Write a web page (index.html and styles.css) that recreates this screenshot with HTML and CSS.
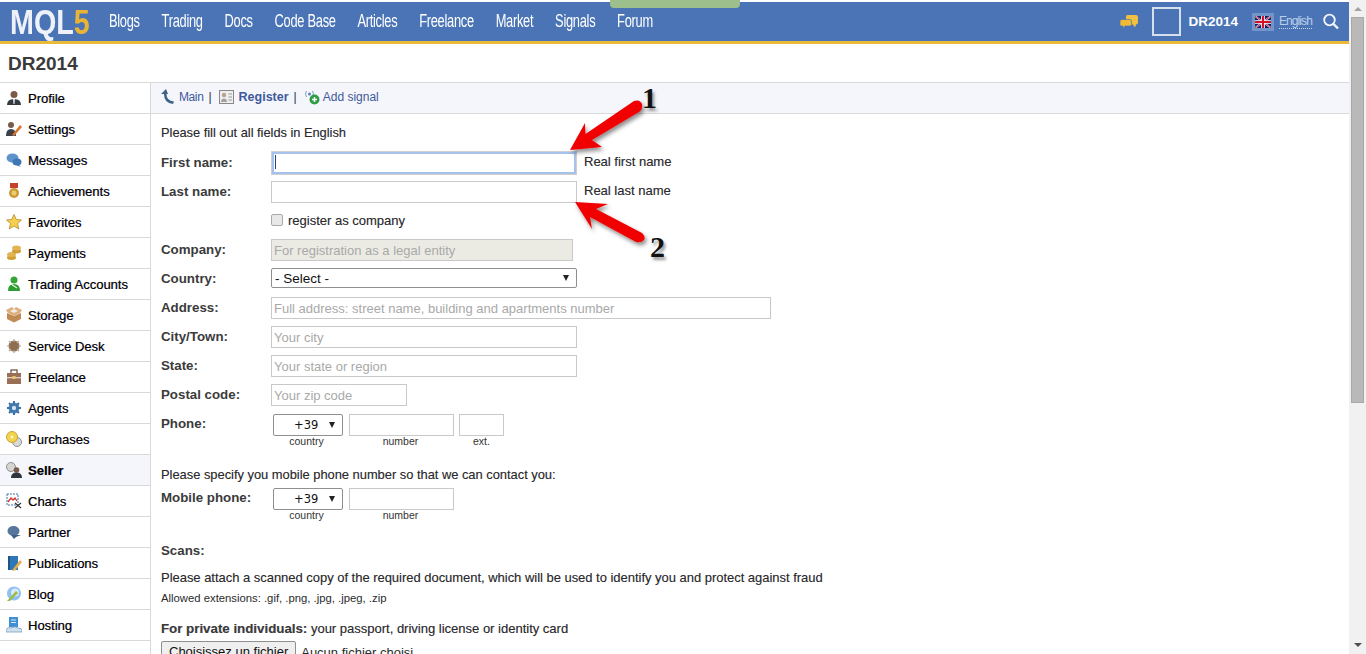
FILE: index.html
```html
<!DOCTYPE html>
<html lang="en">
<head>
<meta charset="utf-8">
<title>MQL5 - Register</title>
<link rel="stylesheet" href="styles.css">
</head>
<body>
<div class="window">
<div class="page">
  <div class="top-strip"><span class="green-tab"></span></div>
  <header class="topbar">
    <a class="logo"><span class="logo-text">MQL<span class="logo-five">5</span></span></a>
    <nav class="mainnav">
      <a class="nav-link">Blogs</a><a class="nav-link">Trading</a><a class="nav-link">Docs</a><a class="nav-link">Code Base</a><a class="nav-link">Articles</a><a class="nav-link">Freelance</a><a class="nav-link">Market</a><a class="nav-link">Signals</a><a class="nav-link">Forum</a>
    </nav>
    <div class="userbox">
      <svg class="chat-icon" width="18" height="14" viewBox="0 0 18 14"><path d="M7.500 0H16Q18 0 18 2V7.500Q18 9.500 16 9.500L15 12.500L13 9.500H6V2Q6 0 7.500 0Z" fill="#f0c040"/><path d="M1.500 4.500H10Q11.500 4.500 11.500 6V9.500Q11.500 11 10 11H5L3 13.500V11H1.500Q0 11 0 9.500V6Q0 4.500 1.500 4.500Z" fill="#f0bb33" stroke="#4a74b6" stroke-width=".7"/></svg>
      <span class="avatar"></span>
      <span class="username">DR2014</span>
      <span class="flag-box"><svg width="16" height="12" viewBox="0 0 16 12"><rect width="16" height="12" fill="#14206e"/><path d="M0 0L16 12M16 0L0 12" stroke="#fff" stroke-width="1.600"/><path d="M0 0L16 12M16 0L0 12" stroke="#d3112b" stroke-width=".9"/><path d="M8 0V12M0 6H16" stroke="#fff" stroke-width="3.600"/><path d="M8 0V12M0 6H16" stroke="#d3112b" stroke-width="2"/></svg></span>
      <span class="lang">English</span>
      <svg class="search-icon" width="16" height="17" viewBox="0 0 16 17"><circle cx="6.500" cy="7" r="5.300" fill="none" stroke="#f2f5fa" stroke-width="1.800"/><path d="M10.500 11L15 15.500" stroke="#f2f5fa" stroke-width="2.400"/></svg>
    </div>
  </header>
  <div class="user-title">DR2014</div>
  <div class="columns">
    <aside class="sidebar">
      <a class="menu-item"><svg class="mi" viewBox="0 0 16 16"><circle cx="8" cy="4.500" r="3.500" fill="#7a5a48"/><path d="M1 15Q1 9 8 9T15 15Z" fill="#353b42"/><path d="M7 9H9L8.500 14H7.500Z" fill="#dfe3e8"/></svg>Profile</a>
      <a class="menu-item"><svg class="mi" viewBox="0 0 16 16"><circle cx="5" cy="4" r="3" fill="#7a5a48"/><path d="M0 15Q0 8 5 8T10 15Z" fill="#3d4248"/><path d="M6 14L14 4L16 6L8 15Z" fill="#d8752a"/></svg>Settings</a>
      <a class="menu-item"><svg class="mi" viewBox="0 0 16 16"><ellipse cx="6.500" cy="6" rx="6" ry="4.500" fill="#5f93cc"/><ellipse cx="11" cy="10" rx="4.500" ry="3.500" fill="#3f76b4"/><path d="M12 12L15 15L10 13Z" fill="#3f76b4"/></svg>Messages</a>
      <a class="menu-item"><svg class="mi" viewBox="0 0 16 16"><rect x="4" y="0" width="8" height="5" fill="#c7402d"/><circle cx="8" cy="10" r="5" fill="#cb9a35"/><circle cx="8" cy="10" r="2.500" fill="#eccb72"/></svg>Achievements</a>
      <a class="menu-item"><svg class="mi" viewBox="0 0 16 16"><path d="M8 .5L10.300 5.500L15.500 6L11.500 9.500L12.800 15L8 12L3.200 15L4.500 9.500L.5 6L5.700 5.500Z" fill="#f6cf4e" stroke="#ae8a2e" stroke-width=".8"/></svg>Favorites</a>
      <a class="menu-item"><svg class="mi" viewBox="0 0 16 16"><ellipse cx="5.500" cy="12.500" rx="4.500" ry="2.500" fill="#d09c34"/><ellipse cx="5.500" cy="9.500" rx="4.500" ry="2.500" fill="#e2b552"/><ellipse cx="10.500" cy="6" rx="4.500" ry="2.500" fill="#d09c34"/><ellipse cx="10.500" cy="3" rx="4.500" ry="2.500" fill="#e2b552"/></svg>Payments</a>
      <a class="menu-item"><svg class="mi" viewBox="0 0 16 16"><circle cx="8" cy="4" r="3.500" fill="#37a536"/><path d="M2 15Q2 8 8 8T14 15Z" fill="#2f9c32"/><path d="M5 8L11 12" stroke="#d9f3cf" stroke-width="1.500"/></svg>Trading Accounts</a>
      <a class="menu-item"><svg class="mi" viewBox="0 0 16 16"><path d="M1 6L8 9L15 6V12L8 15.500L1 12Z" fill="#c08a55"/><path d="M0 3L6 0L8 2L10 0L16 3L14 6L8 9L2 6Z" fill="#dcae7c"/><path d="M4 4L8 2L12 4L8 6Z" fill="#f1ede6"/></svg>Storage</a>
      <a class="menu-item"><svg class="mi" viewBox="0 0 16 16"><circle cx="8" cy="8" r="5.500" fill="#8e6d50"/><path d="M8 1V15M1 8H15M3 3L13 13M13 3L3 13" stroke="#b5a594" stroke-width="1.200"/><circle cx="8" cy="8" r="4" fill="#8e6d50"/></svg>Service Desk</a>
      <a class="menu-item"><svg class="mi" viewBox="0 0 16 16"><rect x="5" y="1" width="6" height="4" fill="none" stroke="#6f5646" stroke-width="1.300"/><rect x="1" y="4" width="14" height="11" fill="#9a6f55"/><rect x="1" y="8" width="14" height="1.300" fill="#e2d4c5"/><rect x="6.500" y="7" width="3" height="3" fill="#e8c66d"/></svg>Freelance</a>
      <a class="menu-item"><svg class="mi" viewBox="0 0 16 16"><circle cx="8" cy="8" r="5.500" fill="#4e86bc"/><path d="M8 1V15M1 8H15M3 3L13 13M13 3L3 13" stroke="#3e73a8" stroke-width="2"/><circle cx="8" cy="8" r="2.200" fill="#cfe2f2"/></svg>Agents</a>
      <a class="menu-item"><svg class="mi" viewBox="0 0 16 16"><circle cx="11" cy="11" r="4.500" fill="#d9d9d6" stroke="#8f8f8f"/><circle cx="6" cy="6" r="5.500" fill="#f0d451" stroke="#c9a431"/><circle cx="6" cy="6" r="1.500" fill="#fff5c0"/></svg>Purchases</a>
      <a class="menu-item current"><svg class="mi" viewBox="0 0 16 16"><circle cx="5" cy="5" r="4.500" fill="#d5d5d2" stroke="#8f8f8f"/><circle cx="10.500" cy="8" r="2.800" fill="#7a5a48"/><path d="M5 16Q5 10.500 10.500 10.500T16 16Z" fill="#2f353c"/></svg>Seller</a>
      <a class="menu-item"><svg class="mi" viewBox="0 0 16 16"><rect x="1" y="1" width="11" height="11" fill="none" stroke="#3f70a8" stroke-dasharray="2 1"/><path d="M2 9L5 5L7 7L9 5L11 8" fill="none" stroke="#c7352c" stroke-width="1.300"/><path d="M9 10L15 15M15 10L9 15" stroke="#333" stroke-width="1.200"/></svg>Charts</a>
      <a class="menu-item"><svg class="mi" viewBox="0 0 16 16"><ellipse cx="7.500" cy="7" rx="6" ry="5" fill="#56769c"/><path d="M5 11H15L10 13L8 15Z" fill="#3d5f88"/></svg>Partner</a>
      <a class="menu-item"><svg class="mi" viewBox="0 0 16 16"><rect x="2" y="1" width="10" height="14" fill="#2f77b6"/><rect x="2" y="1" width="2" height="14" fill="#1d5487"/><path d="M7 14L14 5L16 7L9 15.500L6.500 16Z" fill="#e3b24a"/></svg>Publications</a>
      <a class="menu-item"><svg class="mi" viewBox="0 0 16 16"><circle cx="8" cy="7.500" r="7" fill="#8fc0ee"/><circle cx="9" cy="6.500" r="4" fill="#d7e9f8"/><path d="M1 15L10 5L12 7L4 15Z" fill="#9dbb45"/></svg>Blog</a>
      <a class="menu-item"><svg class="mi" viewBox="0 0 16 16"><rect x="3" y="0" width="9" height="10" fill="#3f8fd2"/><path d="M5 3H10M5 5.500H10" stroke="#d4e8f8"/><path d="M0 15V12.500Q2 9.500 5 11Q9 8.500 12 11Q16 11 16 13.500V15Z" fill="#cfe0ee" stroke="#6d94b8" stroke-width=".7"/></svg>Hosting</a>
    </aside>
    <main class="content">
      <div class="toolbar">
        <svg class="tb-icon" width="18" height="16" viewBox="0 0 18 16"><path d="M1 5L6 0L8 5H6.500Q6.500 12 14 12.500L13 15Q4 14 4 5Z" fill="#3d6388"/></svg>
        <a class="tb-link tb-main">Main</a><span class="sep">|</span>
        <svg class="tb-icon tb-card" width="15" height="14" viewBox="0 0 15 14"><rect x=".5" y=".5" width="14" height="13" fill="#eee" stroke="#888"/><circle cx="5" cy="5" r="2.200" fill="#b6a38f"/><path d="M2 12Q2 8.500 5 8.500T8 12Z" fill="#a3a3a3"/><path d="M9.500 4H13M9.500 7H13M9.500 10H13" stroke="#999"/></svg>
        <a class="tb-link tb-bold">Register</a><span class="sep">|</span>
        <svg class="tb-icon tb-signal" width="16" height="16" viewBox="0 0 16 16"><circle cx="5.500" cy="5" r="1.500" fill="#5583b5"/><path d="M2.500 2Q.5 5 2.500 8M8.500 2Q10.500 5 8.500 8" fill="none" stroke="#7aa0c8"/><circle cx="10.500" cy="10.500" r="5" fill="#2f9c46"/><path d="M10.500 8V13M8 10.500H13" stroke="#fff" stroke-width="1.500"/></svg>
        <a class="tb-link">Add signal</a>
      </div>
      <form class="form">
        <p class="intro">Please fill out all fields in English</p>
        <div class="row">
          <label class="lbl">First name:</label>
          <input class="field w-name focus" type="text">
          <span class="hint">Real first name</span>
        </div>
        <div class="row">
          <label class="lbl">Last name:</label>
          <input class="field w-name" type="text">
          <span class="hint">Real last name</span>
        </div>
        <div class="row check-row">
          <span class="lbl"></span>
          <span class="checkbox"></span><span class="check-text">register as company</span>
        </div>
        <div class="row">
          <label class="lbl">Company:</label>
          <input class="field w-company disabled" type="text" placeholder="For registration as a legal entity" disabled>
        </div>
        <div class="row select-row">
          <label class="lbl">Country:</label>
          <span class="select w-name"><span>- Select -</span><i class="caret"></i></span>
        </div>
        <div class="row">
          <label class="lbl">Address:</label>
          <input class="field w-address" type="text" placeholder="Full address: street name, building and apartments number">
        </div>
        <div class="row">
          <label class="lbl">City/Town:</label>
          <input class="field w-name" type="text" placeholder="Your city">
        </div>
        <div class="row">
          <label class="lbl">State:</label>
          <input class="field w-name" type="text" placeholder="Your state or region">
        </div>
        <div class="row postal-row">
          <label class="lbl">Postal code:</label>
          <input class="field w-zip" type="text" placeholder="Your zip code">
        </div>
        <div class="row phone-row">
          <label class="lbl">Phone:</label>
          <div class="ph-col ph-country">
            <span class="select ph-select"><span class="code">+39</span><i class="caret"></i></span>
            <small class="cap cap-country">country</small>
          </div>
          <div class="ph-col ph-number">
            <input class="field ph-input" type="text">
            <small class="cap cap-number">number</small>
          </div>
          <div class="ph-col ph-ext">
            <input class="field ph-input" type="text">
            <small class="cap">ext.</small>
          </div>
        </div>
        <p class="mobile-note">Please specify you mobile phone number so that we can contact you:</p>
        <div class="row phone-row">
          <label class="lbl">Mobile phone:</label>
          <div class="ph-col ph-country">
            <span class="select ph-select"><span class="code">+39</span><i class="caret"></i></span>
            <small class="cap cap-country">country</small>
          </div>
          <div class="ph-col ph-number">
            <input class="field ph-input" type="text">
            <small class="cap cap-number">number</small>
          </div>
        </div>
        <h3 class="scans">Scans:</h3>
        <p class="attach">Please attach a scanned copy of the required document, which will be used to identify you and protect against fraud</p>
        <p class="allowed">Allowed extensions: .gif, .png, .jpg, .jpeg, .zip</p>
        <p class="private"><b>For private individuals:</b> your passport, driving license or identity card</p>
        <div class="file-row"><span class="file-btn">Choisissez un fichier</span><span class="file-none">Aucun fichier choisi</span></div>
      </form>
    </main>
  </div>
  <svg class="arrows" width="120" height="190" viewBox="0 0 120 190">
    <defs><filter id="sh" x="-20%" y="-20%" width="150%" height="150%"><feDropShadow dx="2" dy="3" stdDeviation="2" flood-color="#000" flood-opacity=".45"/></filter></defs>
    <path d="M10 70L25 43L25.500 54L74 21Q80 19 82 24Q83 29 79 32L32 60L42 67Z" fill="#f00000" filter="url(#sh)"/>
    <path d="M15 122L48 124L36 129L82 153Q86 157 84 160Q81 163 76 162L30 137L32 149Z" fill="#f00000" filter="url(#sh)"/>
  </svg>
  <span class="num num-one">1</span>
  <span class="num num-two">2</span>
</div>
<div class="scrollbar">
  <i class="sb-up"></i>
  <span class="sb-thumb"></span>
  <i class="sb-down"></i>
</div>
</div>
</body>
</html>
```

FILE: styles.css
```css
* { box-sizing: border-box; }
html, body { margin: 0; padding: 0; height: 100%; overflow: hidden; }
body { font-family: "Liberation Sans", Arial, sans-serif; font-size: 13px; color: #2b2b2b; background: #fff; }
p, h3 { margin: 0; }

.window { display: flex; height: 654px; }
.page { position: relative; flex: 1; min-width: 0; overflow: hidden; }

.top-strip { height: 2px; display: flex; justify-content: center; }
.green-tab { width: 130px; height: 8px; background: #9cbf8c; border-radius: 0 0 4px 4px; position: relative; z-index: 2; }

.topbar { height: 42px; background: #4a74b6; border-bottom: 3px solid #eab939; display: flex; align-items: center; padding-left: 10px; color: #fff; }
.logo { font-weight: 700; font-size: 35px; color: #eef2f8; width: 99px; flex: none; line-height: 39px; }
.logo-text { display: inline-block; transform: scaleX(.82); transform-origin: left center; white-space: nowrap; }
.logo-five { color: #e9b436; }
.mainnav { display: flex; gap: 30.500px; flex: none; width: 800px; transform: scaleX(.715); transform-origin: left center; }
.nav-link { font-size: 18px; color: #fff; white-space: nowrap; letter-spacing: -.4px; }
.userbox { margin-left: auto; display: flex; align-items: center; padding-right: 10px; flex: none; }
.chat-icon { margin-right: 14px; }
.avatar { width: 29px; height: 29px; border: 2px solid #d6dfee; margin-right: 7px; }
.username { font-weight: 700; font-size: 13.500px; color: #fff; margin-right: 14px; }
.flag-box { width: 22px; height: 18px; background: #7396c8; display: flex; align-items: center; justify-content: center; margin-right: 5px; }
.lang { font-size: 12px; color: #bcd0ea; border-bottom: 1px dotted #c9d7ec; margin-right: 11px; letter-spacing: -.9px; }

.user-title { height: 39px; border-bottom: 1px solid #d9d9d9; padding: 9px 0 0 8px; font-size: 19px; font-weight: 700; color: #3a3a3a; line-height: 21px; }

.columns { display: flex; }
.sidebar { width: 151px; flex: none; border-right: 1px solid #d9d9d9; height: 600px; }
.menu-item { display: flex; align-items: center; height: 31px; border-bottom: 1px solid #d9d9d9; padding: 0 0 0 6px; font-size: 13px; color: #000; text-shadow: .4px 0 rgba(0,0,210,.45), -.4px 0 rgba(200,190,0,.4); }
.menu-item.current { background: #f5f6fb; font-weight: 700; }
.mi { width: 16px; height: 16px; margin-right: 6px; flex: none; }

.content { flex: 1; min-width: 0; }
.toolbar { height: 31px; background: #f5f6fb; border-bottom: 1px solid #d9d9d9; display: flex; align-items: center; padding: 0 0 2px 9px; font-size: 12px; }
.tb-link { color: #3f5a9a; }
.tb-main { letter-spacing: -.4px; }
.tb-bold { font-weight: 700; font-size: 12.500px; }
.tb-icon { margin-right: 1px; flex: none; }
.tb-card { margin-right: 5px; margin-left: 7px; }
.tb-signal { margin-left: 7px; margin-right: 3px; }
.sep { color: #1a2a50; margin-left: 5px; font-weight: 400; }

.form { padding: 11px 0 0 10px; }
.intro, .hint, .check-text, .mobile-note, .attach, .private { font-size: 13px; text-shadow: .3px 0 rgba(0,0,200,.25), -.3px 0 rgba(180,170,0,.25); }
.intro { line-height: 15px; margin-bottom: 12px; font-size: 12.800px; }
.row { display: flex; align-items: flex-start; margin-bottom: 7px; min-height: 22px; }
.lbl { width: 110px; flex: none; font-weight: 700; color: #3b3b3b; font-size: 13.300px; line-height: 18px; padding-top: 2px; }
.field { height: 22px; border: 1px solid #c9c9c9; background: #fff; padding: 0 2px; font: 13px/20px "Liberation Sans", Arial, sans-serif; color: #333; border-radius: 0; outline: none; }
.field::placeholder { color: #a9a9a9; opacity: 1; }
.w-name { width: 306px; }
.w-company { width: 302px; }
.w-address { width: 500px; }
.w-zip { width: 136px; }
.focus { border: 2px solid #a5c1ec; box-shadow: 0 0 0 1px #cfcfcf; width: 304px; margin: 0 1px; background: linear-gradient(#24457f, #24457f) no-repeat 1px 1px / 1px 14px #fff; }
.disabled { background: #ebebe4; }
.hint { margin-left: 7px; line-height: 18px; padding-top: 1px; }
.check-row { height: 20px; min-height: 20px; margin-bottom: 9px; align-items: center; }
.checkbox { width: 12px; height: 12px; border: 1px solid #a9a9a9; border-radius: 2px; background: #e8e8e8; margin-right: 5px; }
.select-row { margin-bottom: 9px; min-height: 20px; }
.select { height: 20px; border: 1px solid #8f8f8f; border-radius: 2px; background: #fff; display: flex; align-items: center; justify-content: space-between; padding: 0 7px 0 3px; color: #111; font-size: 13.500px; position: relative; }
.caret { width: 0; height: 0; border-left: 3.500px solid transparent; border-right: 3.500px solid transparent; border-top: 6px solid #222; }
.postal-row { margin-bottom: 8px; }

.phone-row { margin-bottom: 0; min-height: 33px; }
.phone-row .lbl { padding-top: 1px; }
.ph-col { display: flex; flex-direction: column; align-items: center; flex: none; }
.ph-country { width: 70px; margin-left: 2px; }
.ph-number { width: 105px; margin-left: 6px; }
.ph-ext { width: 45px; margin-left: 5px; }
.ph-select { width: 70px; height: 22px; padding-left: 20px; }
.code { font-family: "DejaVu Sans", sans-serif; font-size: 11.500px; }
.ph-input { width: 100%; height: 22px; }
.cap { font-size: 10.500px; line-height: 11px; color: #333; }
.cap-country { margin-right: 3px; }
.cap-number { margin-right: 2px; }

.mobile-note { margin-top: 20px; margin-bottom: 6px; line-height: 15px; font-size: 12.870px; }
.scans { font-size: 13.300px; font-weight: 700; color: #3b3b3b; line-height: 15px; margin-top: 22px; }
.attach { line-height: 15px; margin-top: 12px; font-size: 12.950px; }
.allowed { font-size: 11.300px; line-height: 13px; margin-top: 7px; }
.private { line-height: 15px; margin-top: 16px; }
.private b { font-size: 13.300px; color: #3b3b3b; }
.file-row { display: flex; align-items: center; margin-top: 5px; font-size: 13px; }
.file-btn { height: 22px; padding: 2px 7px; background: #efefef; border: 1px solid #8f8f8f; border-radius: 2px; color: #111; font-size: 13px; margin-right: 5px; white-space: nowrap; }

.arrows { position: absolute; left: 560px; top: 80px; pointer-events: none; }
.num { position: absolute; font-family: "Liberation Serif", serif; font-weight: 700; font-size: 30px; line-height: 30px; color: #111; text-shadow: 2px 3px 3px rgba(0,0,0,.4); }
.num-one { left: 642px; top: 83px; }
.num-two { left: 650px; top: 232px; }

.scrollbar { width: 17px; flex: none; background: #f1f1f1; display: flex; flex-direction: column; align-items: center; height: 654px; }
.sb-thumb { width: 13px; height: 386px; margin-top: 6px; background: #b9b9b9; border: 1px solid #a8a8a8; }
.sb-up { width: 0; height: 0; margin-top: 7px; border-left: 4px solid transparent; border-right: 4px solid transparent; border-bottom: 4px solid #a3a3a3; }
.sb-down { width: 0; height: 0; margin-top: auto; margin-bottom: 7px; border-left: 4px solid transparent; border-right: 4px solid transparent; border-top: 4px solid #505050; }
```
